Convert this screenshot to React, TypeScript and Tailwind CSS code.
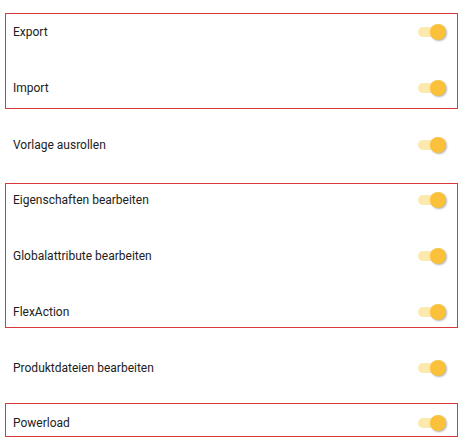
const Toggle = () => (
  <div className="relative h-4 w-7 shrink-0">
    <div className="absolute left-0 top-[3px] h-[10px] w-[24px] rounded-full bg-[#fde9ad]" />
    <div className="absolute right-0 top-0 h-4 w-4 rounded-full bg-[#fbc13a] shadow-[1px_1px_2px_rgba(0,0,0,0.3)]" />
  </div>
);

function Row({ label }: { label: string }) {
  return (
    <div className="flex h-6 items-center justify-between pl-[7px] pr-[11px]">
      <span>{label}</span>
      <Toggle />
    </div>
  );
}

export default function App() {
  return (
    <div
      className="h-[446px] w-[471px] bg-white text-[12px] text-[#212121]"
      style={{ fontFamily: "Roboto, 'Liberation Sans', sans-serif" }}
    >
      <div className="pt-[13px]">
        <div className="ml-[5px] flex w-[453px] flex-col gap-8 border border-[#d83a3a] pt-[6px] pb-[8px]">
          <Row label="Export" />
          <Row label="Import" />
        </div>

        <div className="ml-[5px] mt-[23px] w-[453px] border border-transparent">
          <Row label="Vorlage ausrollen" />
        </div>

        <div className="ml-[5px] mt-[25px] flex w-[453px] flex-col gap-8 border border-[#d83a3a] pt-[4px] pb-[3px]">
          <Row label="Eigenschaften bearbeiten" />
          <Row label="Globalattribute bearbeiten" />
          <Row label="FlexAction" />
        </div>

        <div className="ml-[5px] mt-[27px] w-[453px] border border-transparent">
          <Row label="Produktdateien bearbeiten" />
        </div>

        <div className="ml-[5px] mt-[22px] w-[453px] border border-[#d83a3a] pt-[7px] pb-[1px]">
          <Row label="Powerload" />
        </div>
      </div>
    </div>
  );
}
